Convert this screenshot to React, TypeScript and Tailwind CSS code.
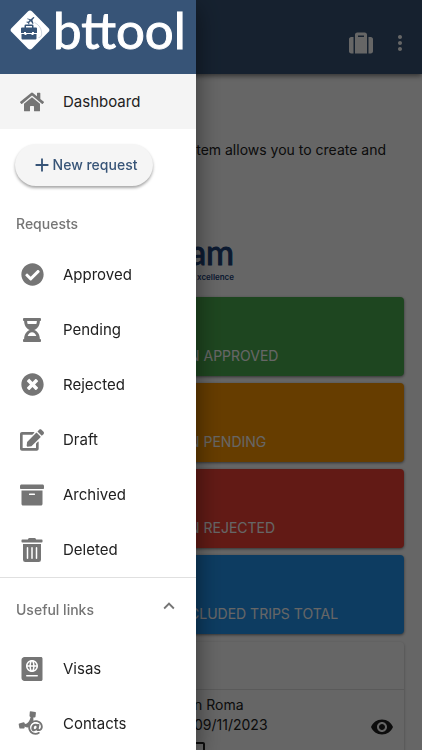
import React from 'react';
import {
  FaHome,
  FaCheckCircle,
  FaHourglassHalf,
  FaTimesCircle,
  FaEdit,
  FaArchive,
  FaTrashAlt,
  FaPassport,
  FaSuitcase,
  FaAt,
} from 'react-icons/fa';
import { MdMoreVert, MdVisibility, MdAdd, MdExpandLess, MdCheckBoxOutlineBlank } from 'react-icons/md';

const ContactsIcon = () => (
  <svg viewBox="0 0 28 28" className="size-7 shrink-0 text-[#757575]" fill="currentColor" aria-hidden="true">
    <path d="M12.500 1.200 17.300 2.100Q18 2.300 17.900 3L17.500 6.800Q17.300 7.600 16.500 7.500L15.300 7.400Q16 13 13 16 10 18.500 6.500 16.500L6.700 17.600Q6.700 18.300 6 18.400L2.300 18.600Q1.600 18.600 1.400 18L.7 14.600Q.6 13.800 1.300 13.600L5.500 12.300Q6.200 12.100 6.500 12.800L7 14Q11 13.500 12.600 7.200L12 6.800Q11.400 6.500 11.500 5.800L11.800 1.800Q11.900 1.200 12.500 1.200Z" />
    <circle cx="18.500" cy="18.500" r="7" className="fill-white" />
    <FaAt x={10} y={10} width={17} height={17} />
  </svg>
);

const requestLinks = [
  { label: 'Approved', icon: <FaCheckCircle size={23} /> },
  { label: 'Pending', icon: <FaHourglassHalf size={24} /> },
  { label: 'Rejected', icon: <FaTimesCircle size={23} /> },
  { label: 'Draft', icon: <FaEdit size={24} /> },
  { label: 'Archived', icon: <FaArchive size={24} /> },
  { label: 'Deleted', icon: <FaTrashAlt size={24} /> },
];

const usefulLinks = [
  { label: 'Visas', icon: <FaPassport size={24} /> },
  { label: 'Contacts', icon: <ContactsIcon /> },
];

const stats = [
  { label: 'N APPROVED', color: 'bg-[#4caf50]' },
  { label: 'N PENDING', color: 'bg-[#ff9800]' },
  { label: 'N REJECTED', color: 'bg-[#f44336]' },
  { label: 'CLUDED TRIPS TOTAL', color: 'bg-[#2196f3]' },
];

const Logo = () => (
  <div className="flex h-[74px] items-start bg-[#375477] pl-[9px] pt-[9px] text-white">
    <svg viewBox="0 0 42 42" className="size-[42px] shrink-0" aria-hidden="true">
      <rect x="6.500" y="6.500" width="29" height="29" rx="3" fill="white" transform="rotate(45 21 21)" />
      <g fill="#375477">
        <path d="M15.500 19v-2.200q0-1.300 1.300-1.300h6.400q1.300 0 1.300 1.300V19h-1.500v-2h-6v2z" />
        <path d="M12 19.500q0-1 1-1h14q1 0 1 1V24h-3v-1h-2v1h-6v-1h-2v1h-3z" />
        <path d="M12.500 25h3v1h2v-1h5v1h2v-1h3v4.500q0 1-1 1H13.500q-1 0-1-1z" />
        <path d="M18.500 9.500l3.300.8 2.300-2q1.300-.8 1.200.4l-1.900 2.400 1.100 3.400-.8.500-1.900-2.800-1.600 1.600.2 1.500-.6.400-.8-1.700-1.700-.8.500-.6 1.400.1 1.500-1.600-2.700-1z" />
      </g>
      <path d="M25.500 13.500q6 3 7 9t-3 6" fill="none" stroke="#375477" strokeWidth=".4" opacity=".6" />
    </svg>
    <span className="pl-[2px] font-['Lato'] text-[51px] leading-[42px] [-webkit-text-stroke:1px_white]">bttool</span>
  </div>
);

const NavItem = ({ label, icon, active = false }: { label: string; icon: React.ReactNode; active?: boolean }) => (
  <a
    href="#"
    className={`flex h-[55px] items-center gap-[19px] pl-5 text-[15px] leading-6 text-[#212121] ${active ? 'bg-[#f4f4f4]' : ''}`}
  >
    <span className="flex w-6 justify-center text-[#757575]">{icon}</span>
    {label}
  </a>
);

const Drawer = () => (
  <aside className="fixed inset-y-0 left-0 w-[196px] overflow-hidden bg-white shadow-[0_8px_24px_rgba(0,0,0,0.5)]">
    <Logo />
    <nav>
      <NavItem label="Dashboard" icon={<FaHome size={24} />} active />
      <button className="mb-[14px] ml-[15px] mt-[15px] flex h-[42px] w-[138px] items-center justify-center rounded-full bg-[#f5f5f5] text-sm font-medium text-[#375477] shadow-[0_2px_3px_rgba(0,0,0,0.35)]">
        <MdAdd size={22} />
        New request
      </button>
      <h2 className="flex h-[47px] items-center pl-4 text-sm font-medium text-[#757575]">Requests</h2>
      {requestLinks.map((item) => (
        <NavItem key={item.label} label={item.label} icon={item.icon} />
      ))}
      <button className="flex h-16 w-full items-center justify-between border-t border-[#e0e0e0] px-4 text-sm font-medium text-[#757575]">
        Useful links
        <MdExpandLess size={22} className="mb-2" />
      </button>
      {usefulLinks.map((item) => (
        <NavItem key={item.label} label={item.label} icon={item.icon} />
      ))}
    </nav>
  </aside>
);

const App = () => {
  return (
    <div className="h-screen overflow-hidden bg-white font-['Inter','Liberation_Sans',sans-serif] text-[#212121]">
      <header className="flex h-[74px] items-center justify-end gap-[15px] bg-[#375477] pr-2.5 pt-3 text-white shadow-[0_2px_5px_rgba(0,0,0,0.5)]">
        <button aria-label="Trips">
          <FaSuitcase size={24} />
        </button>
        <button aria-label="More options">
          <MdMoreVert size={24} />
        </button>
      </header>

      <main className="px-[18px]">
        <p className="pr-[18px] pt-[66px] text-right text-sm leading-5">stem allows you to create and</p>

        {/* Company logo */}
        <div className="flex h-[137px] w-[216px] flex-col items-end justify-end pb-[15px] text-[#20427a]">
          <span className="font-['Lato'] text-[34px] leading-10 [-webkit-text-stroke:1px_#20427a]">am</span>
          <span className="text-[8px] font-semibold leading-[10px]">xcellence</span>
        </div>

        {/* Totals by status */}
        <div className="flex flex-col gap-[7px]">
          {stats.map((stat) => (
            <section
              key={stat.label}
              className={`flex h-[79px] items-end rounded pb-2.5 pl-[171px] text-sm text-white shadow-[0_1px_3px_rgba(0,0,0,0.5)] ${stat.color}`}
            >
              {stat.label}
            </section>
          ))}
        </div>

        <section className="mt-2 rounded shadow-[0_1px_3px_rgba(0,0,0,0.3)]">
          <div className="h-12 border-b border-[#e0e0e0]" />
          <div className="flex items-start justify-between pl-[176px] pr-2.5 pt-[5px] text-sm leading-5">
            <div>
              <p>n Roma</p>
              <p>09/11/2023</p>
              <MdCheckBoxOutlineBlank size={24} className="-ml-2.5 mt-1" />
            </div>
            <button aria-label="View trip" className="mt-5">
              <MdVisibility size={24} />
            </button>
          </div>
        </section>
      </main>

      <div className="fixed inset-0 bg-black/60" />
      <Drawer />
    </div>
  );
};

export default App;
